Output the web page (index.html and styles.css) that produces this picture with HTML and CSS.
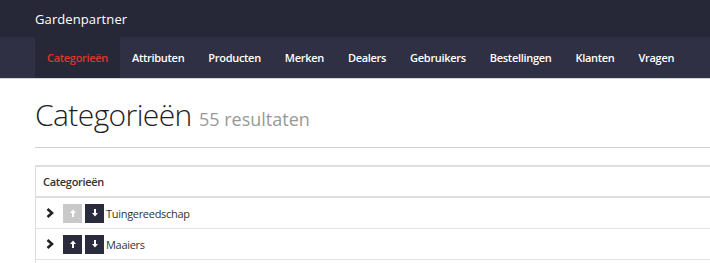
FILE: index.html
```html
<!DOCTYPE html>
<html lang="nl">

<head>
  <meta charset="UTF-8">
  <title>Gardenpartner</title>
  <link rel="stylesheet" href="styles.css">
</head>

<body>
  <div class="topbar">
    <div class="brand">Gardenpartner</div>
  </div>
  <div class="navbar">
    <ul class="nav">
      <li class="active"><a href="javascript:;">Categorieën</a></li>
      <li><a href="javascript:;">Attributen</a></li>
      <li><a href="javascript:;">Producten</a></li>
      <li><a href="javascript:;">Merken</a></li>
      <li><a href="javascript:;">Dealers</a></li>
      <li><a href="javascript:;">Gebruikers</a></li>
      <li><a href="javascript:;">Bestellingen</a></li>
      <li><a href="javascript:;">Klanten</a></li>
      <li><a href="javascript:;">Vragen</a></li>
    </ul>
  </div>

  <div class="content">
    <h1 class="title">Categorieën <small>55 resultaten</small></h1>
    <hr class="divider">

    <table class="list">
      <thead>
        <tr>
          <th>Categorieën</th>
        </tr>
      </thead>
      <tbody>
        <tr>
          <td>
            <div class="row">
              <svg class="chevron" width="8" height="10" viewBox="0 0 8 10"><path d="M1.5 1 L6 5 L1.5 9" fill="none" stroke="#222" stroke-width="2.6"/></svg>
              <span class="btn disabled"><svg width="10" height="10" viewBox="0 0 10 10"><path d="M5 1.5 L8 5 H6 V9 H4 V5 H2 Z" fill="#fff"/></svg></span>
              <span class="btn"><svg width="10" height="10" viewBox="0 0 10 10"><path d="M5 8.5 L8 5 H6 V1 H4 V5 H2 Z" fill="#fff"/></svg></span>
              <span class="name">Tuingereedschap</span>
            </div>
          </td>
        </tr>
        <tr>
          <td>
            <div class="row">
              <svg class="chevron" width="8" height="10" viewBox="0 0 8 10"><path d="M1.5 1 L6 5 L1.5 9" fill="none" stroke="#222" stroke-width="2.6"/></svg>
              <span class="btn"><svg width="10" height="10" viewBox="0 0 10 10"><path d="M5 1.5 L8 5 H6 V9 H4 V5 H2 Z" fill="#fff"/></svg></span>
              <span class="btn"><svg width="10" height="10" viewBox="0 0 10 10"><path d="M5 8.5 L8 5 H6 V1 H4 V5 H2 Z" fill="#fff"/></svg></span>
              <span class="name">Maaiers</span>
            </div>
          </td>
        </tr>
        <tr>
          <td>
            <div class="row"></div>
          </td>
        </tr>
      </tbody>
    </table>
  </div>
</body>

</html>
```

FILE: styles.css
```css
* {
  padding: 0px;
  margin: 0px;
  box-sizing: border-box;
}

html,
body {
  overflow: hidden;
  background: #fff;
  font-family: "Open Sans", "Liberation Sans", sans-serif;
  color: #333;
}

.topbar {
  height: 37px;
  background-color: #272837;
  padding-left: 35px;
  display: flex;
  align-items: center;
}

.brand {
  color: #fff;
  font-size: 13px;
  letter-spacing: 0.1px;
}

.navbar {
  height: 42px;
  background-color: #2f3043;
  border-bottom: 1px solid #d6d6d6;
  padding-left: 35px;
}

.nav {
  display: flex;
  height: 41px;
}

.nav li {
  list-style: none;
}

.nav a {
  display: flex;
  align-items: center;
  height: 41px;
  padding: 0 12px;
  color: #fff;
  font-size: 11px;
  font-weight: 600;
  letter-spacing: -0.3px;
  text-decoration: none;
}

.nav li.active a {
  background-color: #262737;
  color: #e0352b;
}

.content {
  width: 740px;
  padding-left: 35px;
}

.title {
  font-size: 30px;
  font-weight: 300;
  color: #222;
  line-height: 40px;
  margin-top: 16px;
  letter-spacing: -0.6px;
}

.title small {
  font-size: 18px;
  font-weight: 400;
  color: #999;
  letter-spacing: 0;
}

.divider {
  border: none;
  border-top: 1px solid #cfcfcf;
  margin-top: 8px;
}

.list {
  width: 100%;
  margin-top: 17px;
  border-collapse: collapse;
  border: 1px solid #dedede;
  border-top-width: 2px;
}

.list th {
  text-align: left;
  font-size: 11px;
  font-weight: 600;
  color: #333;
  letter-spacing: -0.3px;
  height: 31px;
  padding: 0 7px;
  border-bottom: 2px solid #dedede;
}

.list td {
  height: 31px;
  padding: 0 8px;
  border-bottom: 1px solid #e2e2e2;
}

.row {
  display: flex;
  align-items: center;
  height: 30px;
}

.chevron {
  margin: 0 9px 0 2px;
}

.btn {
  width: 19px;
  height: 19px;
  background-color: #2a2b3c;
  display: flex;
  align-items: center;
  justify-content: center;
  margin-right: 3px;
}

.btn.disabled {
  background-color: #c9c9c9;
}

.name {
  font-size: 11px;
  color: #333;
  letter-spacing: -0.3px;
  margin-left: -1px;
}
```
